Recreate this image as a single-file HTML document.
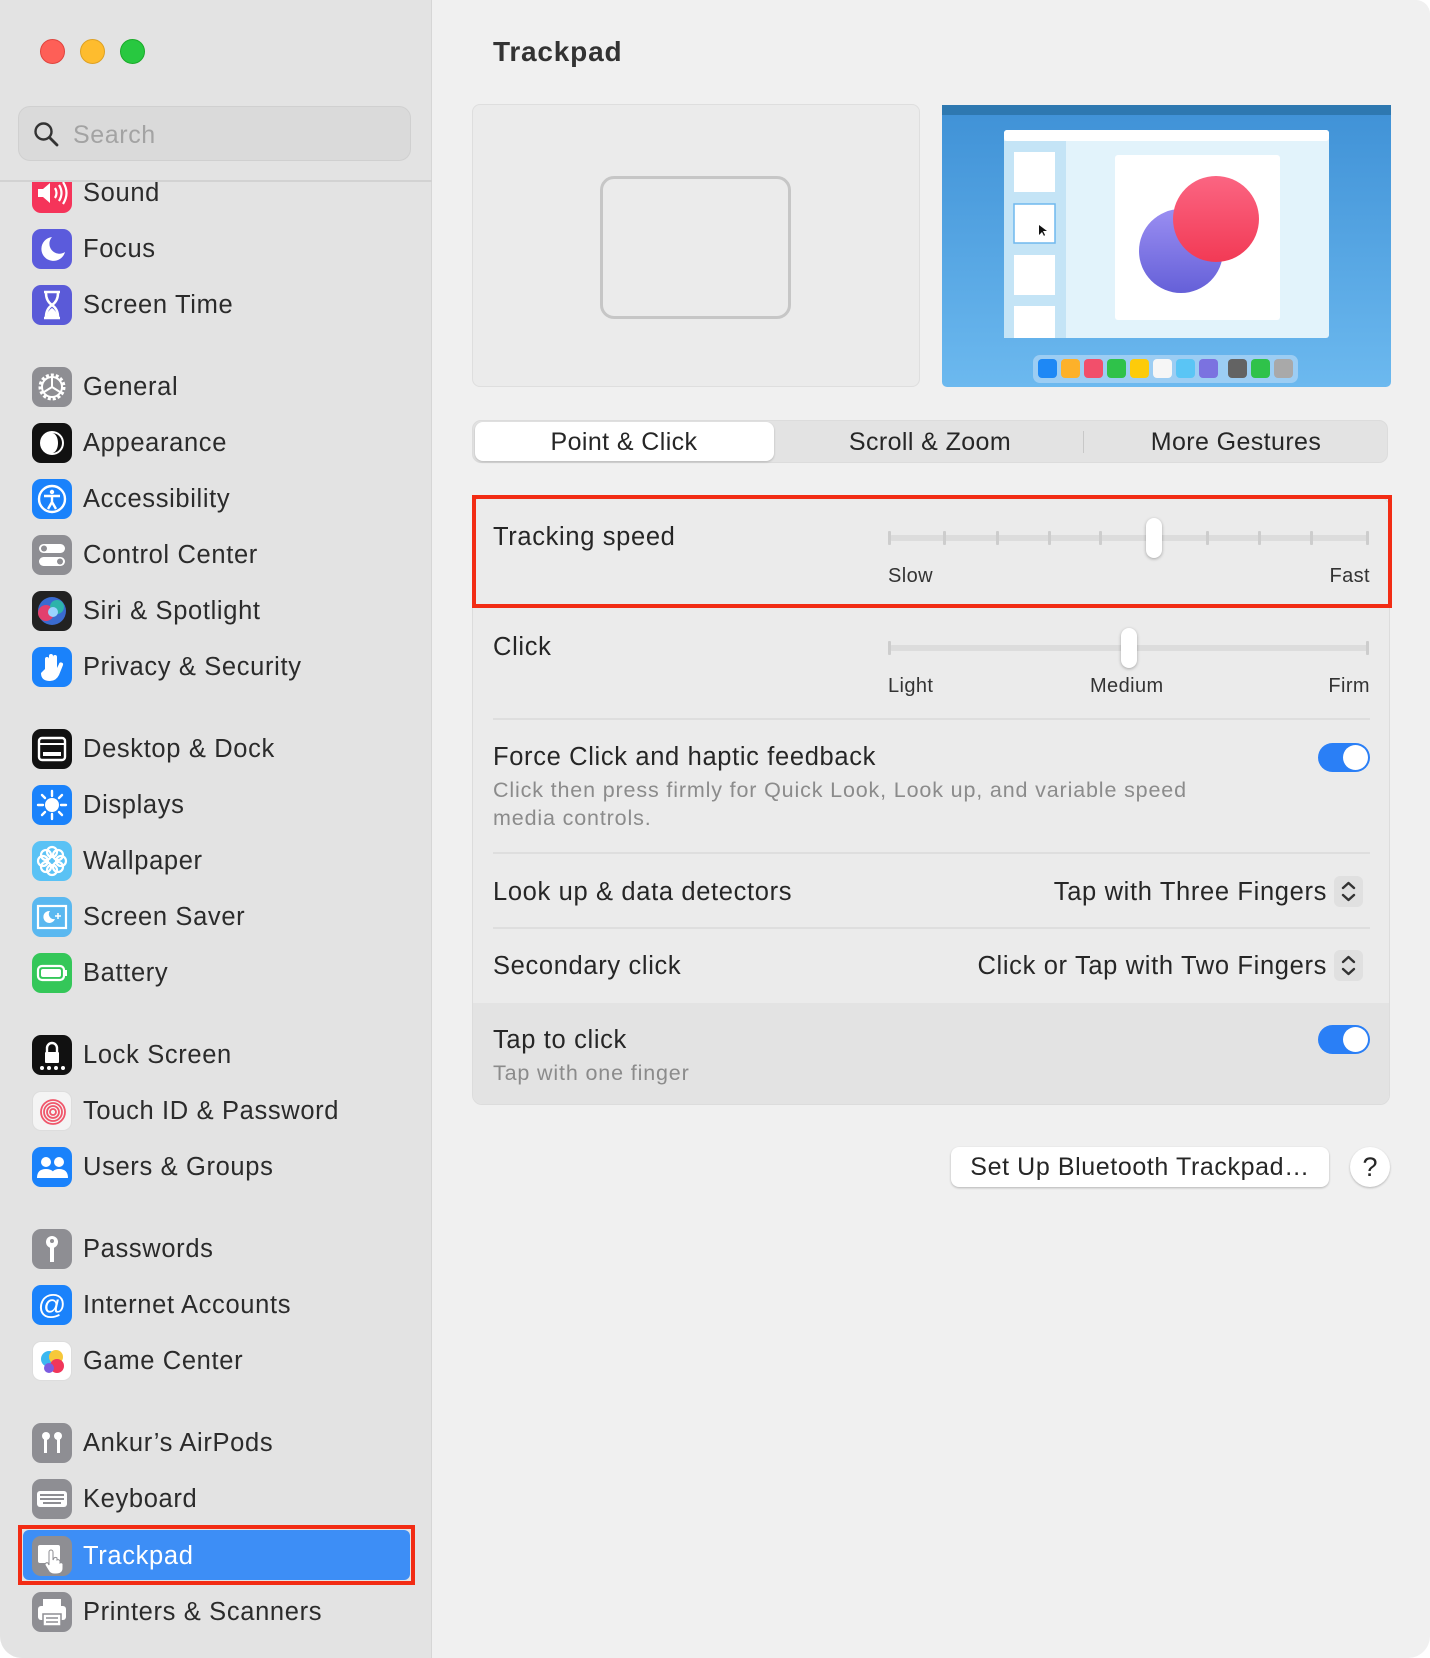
<!DOCTYPE html>
<html><head><meta charset="utf-8"><style>
*{box-sizing:border-box;margin:0;padding:0}
body{width:1430px;height:1658px;background:#fff;font-family:"Liberation Sans",sans-serif;color:#262626;position:relative;overflow:hidden}
.win{position:absolute;left:0;top:0;width:1430px;height:1658px;background:#f0f0f0;border-radius:0 14px 22px 22px;overflow:hidden}
.side{position:absolute;left:0;top:0;width:432px;height:1658px;background:#e3e3e3;border-right:1px solid #d6d6d6}
.tl{position:absolute;top:39px;width:25px;height:25px;border-radius:50%}
.search{position:absolute;left:18px;top:106px;width:393px;height:55px;border-radius:12px;background:#dadada;border:1px solid #d0d0d0}
.search span{position:absolute;left:54px;top:14px;font-size:25px;color:#a3a3a3;letter-spacing:.6px}
.sdiv{position:absolute;left:0;top:180px;width:432px;height:2px;background:#d2d2d2}
.list{position:absolute;left:0;top:182px;width:432px;height:1476px;overflow:hidden}
.it{position:absolute;left:0;height:56px;width:432px}
.it .ic{position:absolute;left:32px;top:8px;width:40px;height:40px;border-radius:9px;overflow:hidden}
.it .ic svg{width:40px;height:40px;display:block}
.it .t{position:absolute;left:83px;top:14px;font-size:25.5px;color:#2b2b2b;white-space:nowrap;letter-spacing:.65px}
.sel{position:absolute;left:18px;top:1525px;width:397px;height:60px;border:4px solid #f22c14;}
.sel div{position:absolute;left:1px;top:1px;right:1px;bottom:1px;background:#3d8ef6;border-radius:6px}
.title{position:absolute;left:493px;top:36px;font-size:28px;font-weight:bold;color:#333;letter-spacing:.8px}
.box{position:absolute;left:472px;top:104px;width:448px;height:283px;background:#ebebeb;border:1px solid #dedede;border-radius:8px}
.pad{position:absolute;left:127px;top:71px;width:191px;height:143px;border:3px solid #c6c6c6;border-radius:14px}
.seg{position:absolute;left:472px;top:420px;width:916px;height:43px;background:#e3e3e3;border-radius:9px;border:1px solid #dcdcdc}
.seg .on{position:absolute;left:2px;top:1px;width:299px;height:39px;background:#fff;border-radius:8px;box-shadow:0 1px 2px rgba(0,0,0,.2)}
.seg span{position:absolute;top:7px;font-size:25px;color:#262626;transform:translateX(-50%);white-space:nowrap;letter-spacing:.4px}
.panel{position:absolute;left:472px;top:497px;width:918px;height:608px;background:#ebebeb;border:1px solid #dcdcdc;border-radius:10px;overflow:hidden}
.lbl{position:absolute;font-size:25.5px;color:#262626;white-space:nowrap;letter-spacing:.65px}
.sm{position:absolute;font-size:20px;color:#333;white-space:nowrap;letter-spacing:.4px}
.desc{position:absolute;font-size:21.5px;color:#8b8b8b;line-height:28px;letter-spacing:.85px;white-space:nowrap}
.hr{position:absolute;left:493px;width:877px;height:2px;background:#dedede}
.track{position:absolute;height:6px;background:#dcdcdc;border-radius:3px}
.tick{position:absolute;width:3px;height:14px;background:#cdcdcd;border-radius:1px}
.knob{position:absolute;width:16px;height:40px;background:#fff;border-radius:8px;box-shadow:0 1px 3px rgba(0,0,0,.3)}
.tog{position:absolute;width:52px;height:29px;border-radius:15px;background:#2a7ff6}
.tog::after{content:"";position:absolute;right:2px;top:2px;width:25px;height:25px;border-radius:50%;background:#fff}
.step{position:absolute;width:29px;height:31px;background:#e0e0e0;border-radius:6px}
.btn{position:absolute;left:951px;top:1147px;width:378px;height:40px;background:#fff;border-radius:8px;box-shadow:0 1px 2px rgba(0,0,0,.25);font-size:25px;text-align:center;line-height:40px;color:#262626;letter-spacing:.6px;white-space:nowrap}
.q{position:absolute;left:1350px;top:1147px;width:40px;height:40px;background:#fff;border-radius:50%;box-shadow:0 1px 2px rgba(0,0,0,.25);font-size:27px;text-align:center;line-height:40px}
</style></head><body>
<div class="win">
<div class="side">
 <div class="tl" style="left:40px;background:#fe5f57;border:1px solid #e0443e"></div>
 <div class="tl" style="left:80px;background:#febc2e;border:1px solid #dea123"></div>
 <div class="tl" style="left:120px;background:#28c840;border:1px solid #1aab29"></div>
 <div class="search"><svg style="position:absolute;left:14px;top:14px" width="26" height="26" viewBox="0 0 26 26"><circle cx="10.5" cy="10.5" r="8" fill="none" stroke="#333" stroke-width="2.4"/><path d="M16.5 16.5L24 24" stroke="#333" stroke-width="2.8" stroke-linecap="round"/></svg><span>Search</span></div>
 <div class="sdiv"></div>
 <div class="list">
  <div class="it" style="top:-17px"><div class="ic" style="background:#f5345a"><svg viewBox="0 0 40 40"><path d="M6 16h5l7-6v20l-7-6H6z" fill="#fff"/><path d="M23 15q3 5 0 10M27 12q5 8 0 16M31 9q7 11 0 22" stroke="#fff" stroke-width="2.2" fill="none"/></svg></div><div class="t">Sound</div></div>
  <div class="it" style="top:39px"><div class="ic" style="background:#5b5bdc"><svg viewBox="0 0 40 40"><path d="M20 8a12 12 0 1 0 13 15a10 10 0 0 1-13-15z" fill="#fff"/></svg></div><div class="t">Focus</div></div>
  <div class="it" style="top:95px"><div class="ic" style="background:#5a5ad8"><svg viewBox="0 0 40 40"><path d="M12 7h16M12 33h16M14 8q0 8 6 12q6-4 6-12M14 32q0-8 6-12q6 4 6 12z" stroke="#fff" stroke-width="2.5" fill="none"/><path d="M15 32q0-6 5-9q5 3 5 9z" fill="#fff"/></svg></div><div class="t">Screen Time</div></div>
  <div class="it" style="top:177px"><div class="ic" style="background:#8e8e93"><svg viewBox="0 0 40 40"><circle cx="20" cy="20" r="12" fill="none" stroke="#fff" stroke-width="3" stroke-dasharray="3 2"/><circle cx="20" cy="20" r="10" fill="none" stroke="#fff" stroke-width="2"/><path d="M20 20L20 10M20 20l-8 5M20 20l8 5" stroke="#fff" stroke-width="2"/></svg></div><div class="t">General</div></div>
  <div class="it" style="top:233px"><div class="ic" style="background:#111"><svg viewBox="0 0 40 40"><circle cx="20" cy="20" r="12" fill="#fff"/><path d="M20 10a10 10 0 0 1 0 20a6 10 0 0 0 0-20z" fill="#111"/></svg></div><div class="t">Appearance</div></div>
  <div class="it" style="top:289px"><div class="ic" style="background:#1a82fb"><svg viewBox="0 0 40 40"><circle cx="20" cy="20" r="13" fill="none" stroke="#fff" stroke-width="2.4"/><circle cx="20" cy="13" r="2.2" fill="#fff"/><path d="M12 17h16M20 17v6l-4 7M20 23l4 7" stroke="#fff" stroke-width="2.4" fill="none"/></svg></div><div class="t">Accessibility</div></div>
  <div class="it" style="top:345px"><div class="ic" style="background:#8e8e93"><svg viewBox="0 0 40 40"><rect x="7" y="9" width="26" height="9" rx="4.5" fill="#fff"/><rect x="7" y="22" width="26" height="9" rx="4.5" fill="#fff"/><circle cx="12" cy="13.5" r="3" fill="#8e8e93"/><circle cx="28" cy="26.5" r="3" fill="#8e8e93"/></svg></div><div class="t">Control Center</div></div>
  <div class="it" style="top:401px"><div class="ic" style="background:#222"><svg viewBox="0 0 40 40"><circle cx="20" cy="20" r="14" fill="#3a6bd0"/><circle cx="14" cy="22" r="8" fill="#e2406e"/><circle cx="25" cy="16" r="7" fill="#2bc6a0" opacity=".8"/><circle cx="21" cy="21" r="5" fill="#9ad3ff"/></svg></div><div class="t">Siri &amp; Spotlight</div></div>
  <div class="it" style="top:457px"><div class="ic" style="background:#1a82fb"><svg viewBox="0 0 40 40"><path d="M13 22V12a2 2 0 0 1 4 0v8V9a2 2 0 0 1 4 0v11V10a2 2 0 0 1 4 0v11l2-4a2 2 0 0 1 4 1l-4 10q-3 6-9 6q-9 0-9-8z" fill="#fff"/></svg></div><div class="t">Privacy &amp; Security</div></div>
  <div class="it" style="top:539px"><div class="ic" style="background:#111"><svg viewBox="0 0 40 40"><rect x="7" y="9" width="26" height="22" rx="3" fill="none" stroke="#fff" stroke-width="2.4"/><path d="M8 15h24" stroke="#fff" stroke-width="2"/><rect x="11" y="23" width="18" height="4" fill="#fff"/></svg></div><div class="t">Desktop &amp; Dock</div></div>
  <div class="it" style="top:595px"><div class="ic" style="background:#1a82fb"><svg viewBox="0 0 40 40"><circle cx="20" cy="20" r="7" fill="#fff"/><path d="M20 6v5M20 29v5M6 20h5M29 20h5M10 10l3 3M27 27l3 3M10 30l3-3M27 13l3-3" stroke="#fff" stroke-width="2.4" stroke-linecap="round"/></svg></div><div class="t">Displays</div></div>
  <div class="it" style="top:651px"><div class="ic" style="background:#5ac2f5"><svg viewBox="0 0 40 40"><g fill="none" stroke="#fff" stroke-width="2.2"><circle cx="20" cy="11" r="5"/><circle cx="20" cy="29" r="5"/><circle cx="11" cy="20" r="5"/><circle cx="29" cy="20" r="5"/><circle cx="14" cy="14" r="5"/><circle cx="26" cy="26" r="5"/><circle cx="26" cy="14" r="5"/><circle cx="14" cy="26" r="5"/></g></svg></div><div class="t">Wallpaper</div></div>
  <div class="it" style="top:707px"><div class="ic" style="background:#5ab8f0"><svg viewBox="0 0 40 40"><rect x="6" y="9" width="28" height="22" fill="none" stroke="#fff" stroke-width="2.2"/><path d="M18 14a6 6 0 1 0 5 8a5 5 0 0 1-5-8z" fill="#fff"/><path d="M26 16v6M23 19h6" stroke="#fff" stroke-width="1.5"/></svg></div><div class="t">Screen Saver</div></div>
  <div class="it" style="top:763px"><div class="ic" style="background:#34c759"><svg viewBox="0 0 40 40"><rect x="6" y="13" width="26" height="14" rx="4" fill="none" stroke="#fff" stroke-width="2.2"/><rect x="9" y="16" width="20" height="8" rx="2" fill="#fff"/><rect x="33" y="17" width="2" height="6" fill="#fff"/></svg></div><div class="t">Battery</div></div>
  <div class="it" style="top:845px"><div class="ic" style="background:#111"><svg viewBox="0 0 40 40"><rect x="13" y="17" width="14" height="11" rx="1" fill="#fff"/><path d="M15 17v-4a5 5 0 0 1 10 0v4" stroke="#fff" stroke-width="2.4" fill="none"/><g fill="#fff"><circle cx="10" cy="33" r="2"/><circle cx="17" cy="33" r="2"/><circle cx="24" cy="33" r="2"/><circle cx="31" cy="33" r="2"/></g></svg></div><div class="t">Lock Screen</div></div>
  <div class="it" style="top:901px"><div class="ic" style="background:#f4f4f4;border:1px solid #ddd"><svg viewBox="0 0 40 40"><g fill="none" stroke="#f0566a" stroke-width="1.8"><circle cx="20" cy="20" r="12"/><circle cx="20" cy="20" r="9"/><circle cx="20" cy="20" r="6"/><circle cx="20" cy="20" r="3"/></g></svg></div><div class="t">Touch ID &amp; Password</div></div>
  <div class="it" style="top:957px"><div class="ic" style="background:#1a82fb"><svg viewBox="0 0 40 40"><circle cx="14" cy="15" r="5" fill="#fff"/><circle cx="27" cy="15" r="5" fill="#fff"/><path d="M5 31q0-9 9-9q9 0 9 9zM19 31q0-9 8-9q9 0 9 9z" fill="#fff"/></svg></div><div class="t">Users &amp; Groups</div></div>
  <div class="it" style="top:1039px"><div class="ic" style="background:#8e8e93"><svg viewBox="0 0 40 40"><circle cx="20" cy="13" r="6" fill="#fff"/><rect x="18" y="17" width="4" height="16" fill="#fff"/><circle cx="20" cy="12" r="2" fill="#8e8e93"/></svg></div><div class="t">Passwords</div></div>
  <div class="it" style="top:1095px"><div class="ic" style="background:#1a82fb"><svg viewBox="0 0 40 40"><text x="20" y="29" font-family="Liberation Sans" font-size="28" fill="#fff" text-anchor="middle">@</text></svg></div><div class="t">Internet Accounts</div></div>
  <div class="it" style="top:1151px"><div class="ic" style="background:#fff;border:1px solid #ddd"><svg viewBox="0 0 40 40"><circle cx="16" cy="17" r="8" fill="#3cb8f0"/><circle cx="23" cy="15" r="7" fill="#f6c83a"/><circle cx="24" cy="24" r="7" fill="#f0365a"/><circle cx="16" cy="26" r="5" fill="#7b5ce0"/></svg></div><div class="t">Game Center</div></div>
  <div class="it" style="top:1233px"><div class="ic" style="background:#8e8e93"><svg viewBox="0 0 40 40"><circle cx="14" cy="13" r="4" fill="#fff"/><circle cx="26" cy="13" r="4" fill="#fff"/><rect x="12" y="13" width="3" height="17" fill="#fff"/><rect x="25" y="13" width="3" height="17" fill="#fff"/></svg></div><div class="t">Ankur’s AirPods</div></div>
  <div class="it" style="top:1289px"><div class="ic" style="background:#8e8e93"><svg viewBox="0 0 40 40"><rect x="5" y="12" width="30" height="16" rx="3" fill="#fff"/><g fill="#8e8e93"><rect x="8" y="15" width="24" height="2"/><rect x="8" y="19" width="24" height="2"/><rect x="11" y="23" width="18" height="2"/></g></svg></div><div class="t">Keyboard</div></div>
 </div>
 <div class="sel"><div></div></div>
 <div class="it" style="top:1528px"><div class="ic" style="background:#8e8e93"><svg viewBox="0 0 40 40"><rect x="6" y="9" width="22" height="18" rx="2" fill="#fff"/><path d="M17 16a2 2 0 0 1 4 0v8l1-2a2 2 0 0 1 3 0v2a2 2 0 0 1 3 1v2a2 2 0 0 1 3 1v4q0 6-7 6h-2q-4 0-6-4l-3-5a2 2 0 0 1 3-2l1 2z" fill="#fff" stroke="#8e8e93" stroke-width="1"/></svg></div><div class="t" style="color:#fff">Trackpad</div></div>
 <div class="it" style="top:1584px"><div class="ic" style="background:#8e8e93"><svg viewBox="0 0 40 40"><rect x="11" y="7" width="18" height="8" fill="#fff"/><rect x="6" y="14" width="28" height="14" rx="3" fill="#fff"/><rect x="11" y="22" width="18" height="12" fill="#fff" stroke="#8e8e93" stroke-width="1.5"/><path d="M14 26h12M14 30h12" stroke="#8e8e93" stroke-width="1.5"/></svg></div><div class="t">Printers &amp; Scanners</div></div>
</div>

<div class="title">Trackpad</div>
<div class="box"><div class="pad"></div></div>
<svg style="position:absolute;left:942px;top:105px" width="449" height="282" viewBox="0 0 449 282">
 <defs><linearGradient id="bg" x1="0" y1="0" x2="0" y2="1"><stop offset="0" stop-color="#3f91d6"/><stop offset="1" stop-color="#6cb9ef"/></linearGradient>
 <linearGradient id="pu" x1="0" y1="0" x2="0" y2="1"><stop offset="0" stop-color="#9a8ef2"/><stop offset="1" stop-color="#6560d8"/></linearGradient>
 <linearGradient id="rd" x1="0" y1="0" x2="0" y2="1"><stop offset="0" stop-color="#fb6582"/><stop offset="1" stop-color="#f23a55"/></linearGradient></defs>
 <rect width="449" height="282" rx="5" fill="url(#bg)"/>
 <rect width="449" height="10" fill="#2e78b0"/>
 <rect x="62" y="25" width="325" height="208" rx="3" fill="#e2f3fb"/>
 <rect x="62" y="25" width="325" height="11" rx="3" fill="#fff"/>
 <rect x="62" y="36" width="62" height="197" fill="#c4e4f6"/>
 <rect x="72" y="47" width="41" height="40" fill="#fff"/>
 <rect x="72" y="99" width="41" height="39" fill="#fff" stroke="#6fb8ee" stroke-width="1.5"/>
 <path d="M97 120l0 10l3-3l2 4l1-1l-2-4h4z" fill="#111"/>
 <rect x="72" y="150" width="41" height="40" fill="#fff"/>
 <rect x="72" y="201" width="41" height="32" fill="#fff"/>
 <rect x="173" y="50" width="165" height="165" rx="3" fill="#fff"/>
 <circle cx="239" cy="146" r="42" fill="url(#pu)"/>
 <circle cx="274" cy="114" r="43" fill="url(#rd)"/>
 <rect x="91" y="250" width="265" height="28" rx="7" fill="#9ccdf3"/>
 <g><rect x="96" y="254" width="19" height="19" rx="4" fill="#1e88f5"/><rect x="119" y="254" width="19" height="19" rx="4" fill="#fdb12a"/><rect x="142" y="254" width="19" height="19" rx="4" fill="#f24f6b"/><rect x="165" y="254" width="19" height="19" rx="4" fill="#2fc24a"/><rect x="188" y="254" width="19" height="19" rx="4" fill="#fdcb0a"/><rect x="211" y="254" width="19" height="19" rx="4" fill="#f6f6f6"/><rect x="234" y="254" width="19" height="19" rx="4" fill="#5ac5f5"/><rect x="257" y="254" width="19" height="19" rx="4" fill="#7b72e0"/><rect x="286" y="254" width="19" height="19" rx="4" fill="#636363"/><rect x="309" y="254" width="19" height="19" rx="4" fill="#2fc24a"/><rect x="332" y="254" width="19" height="19" rx="4" fill="#a9a9a9"/></g>
</svg>

<div class="seg"><div class="on"></div>
 <span style="left:151px">Point &amp; Click</span>
 <span style="left:457px">Scroll &amp; Zoom</span>
 <div style="position:absolute;left:610px;top:10px;width:1px;height:22px;background:#c8c8c8"></div>
 <span style="left:763px">More Gestures</span>
</div>

<div class="panel">
 <div style="position:absolute;left:0;top:505px;width:918px;height:103px;background:#e3e3e3"></div>
</div>
<div style="position:absolute;left:472px;top:495px;width:920px;height:113px;border:4px solid #f22c14"></div>

<div class="lbl" style="left:493px;top:523px">Tracking speed</div>
<div class="track" style="left:889px;top:535px;width:480px"></div>
<div class="tick" style="left:888px;top:531px"></div><div class="tick" style="left:943px;top:531px"></div><div class="tick" style="left:996px;top:531px"></div><div class="tick" style="left:1048px;top:531px"></div><div class="tick" style="left:1099px;top:531px"></div><div class="tick" style="left:1206px;top:531px"></div><div class="tick" style="left:1258px;top:531px"></div><div class="tick" style="left:1310px;top:531px"></div><div class="tick" style="left:1366px;top:531px"></div>
<div class="knob" style="left:1146px;top:518px"></div>
<div class="sm" style="left:888px;top:565px">Slow</div>
<div class="sm" style="left:1320px;top:565px;width:50px;text-align:right">Fast</div>

<div class="lbl" style="left:493px;top:633px">Click</div>
<div class="track" style="left:889px;top:645px;width:480px"></div>
<div class="tick" style="left:888px;top:641px"></div><div class="tick" style="left:1366px;top:641px"></div>
<div class="knob" style="left:1121px;top:628px"></div>
<div class="sm" style="left:888px;top:675px">Light</div>
<div class="sm" style="left:1090px;top:675px">Medium</div>
<div class="sm" style="left:1315px;top:675px;width:55px;text-align:right">Firm</div>
<div class="hr" style="top:718px"></div>

<div class="lbl" style="left:493px;top:743px">Force Click and haptic feedback</div>
<div class="desc" style="left:493px;top:776px">Click then press firmly for Quick Look, Look up, and variable speed<br>media controls.</div>
<div class="tog" style="left:1318px;top:743px"></div>
<div class="hr" style="top:852px"></div>

<div class="lbl" style="left:493px;top:878px">Look up &amp; data detectors</div>
<div class="lbl" style="left:880px;top:878px;width:447px;text-align:right">Tap with Three Fingers</div>
<div class="step" style="left:1334px;top:876px"><svg width="29" height="31" viewBox="0 0 29 31"><path d="M9 12l5.5-5 5.5 5M9 19l5.5 5 5.5-5" fill="none" stroke="#333" stroke-width="2.4" stroke-linecap="round" stroke-linejoin="round"/></svg></div>
<div class="hr" style="top:927px"></div>

<div class="lbl" style="left:493px;top:952px">Secondary click</div>
<div class="lbl" style="left:830px;top:952px;width:497px;text-align:right">Click or Tap with Two Fingers</div>
<div class="step" style="left:1334px;top:950px"><svg width="29" height="31" viewBox="0 0 29 31"><path d="M9 12l5.5-5 5.5 5M9 19l5.5 5 5.5-5" fill="none" stroke="#333" stroke-width="2.4" stroke-linecap="round" stroke-linejoin="round"/></svg></div>

<div class="lbl" style="left:493px;top:1026px">Tap to click</div>
<div class="desc" style="left:493px;top:1059px">Tap with one finger</div>
<div class="tog" style="left:1318px;top:1025px"></div>

<div class="btn">Set Up Bluetooth Trackpad…</div>
<div class="q">?</div>
</div>
</body></html>
